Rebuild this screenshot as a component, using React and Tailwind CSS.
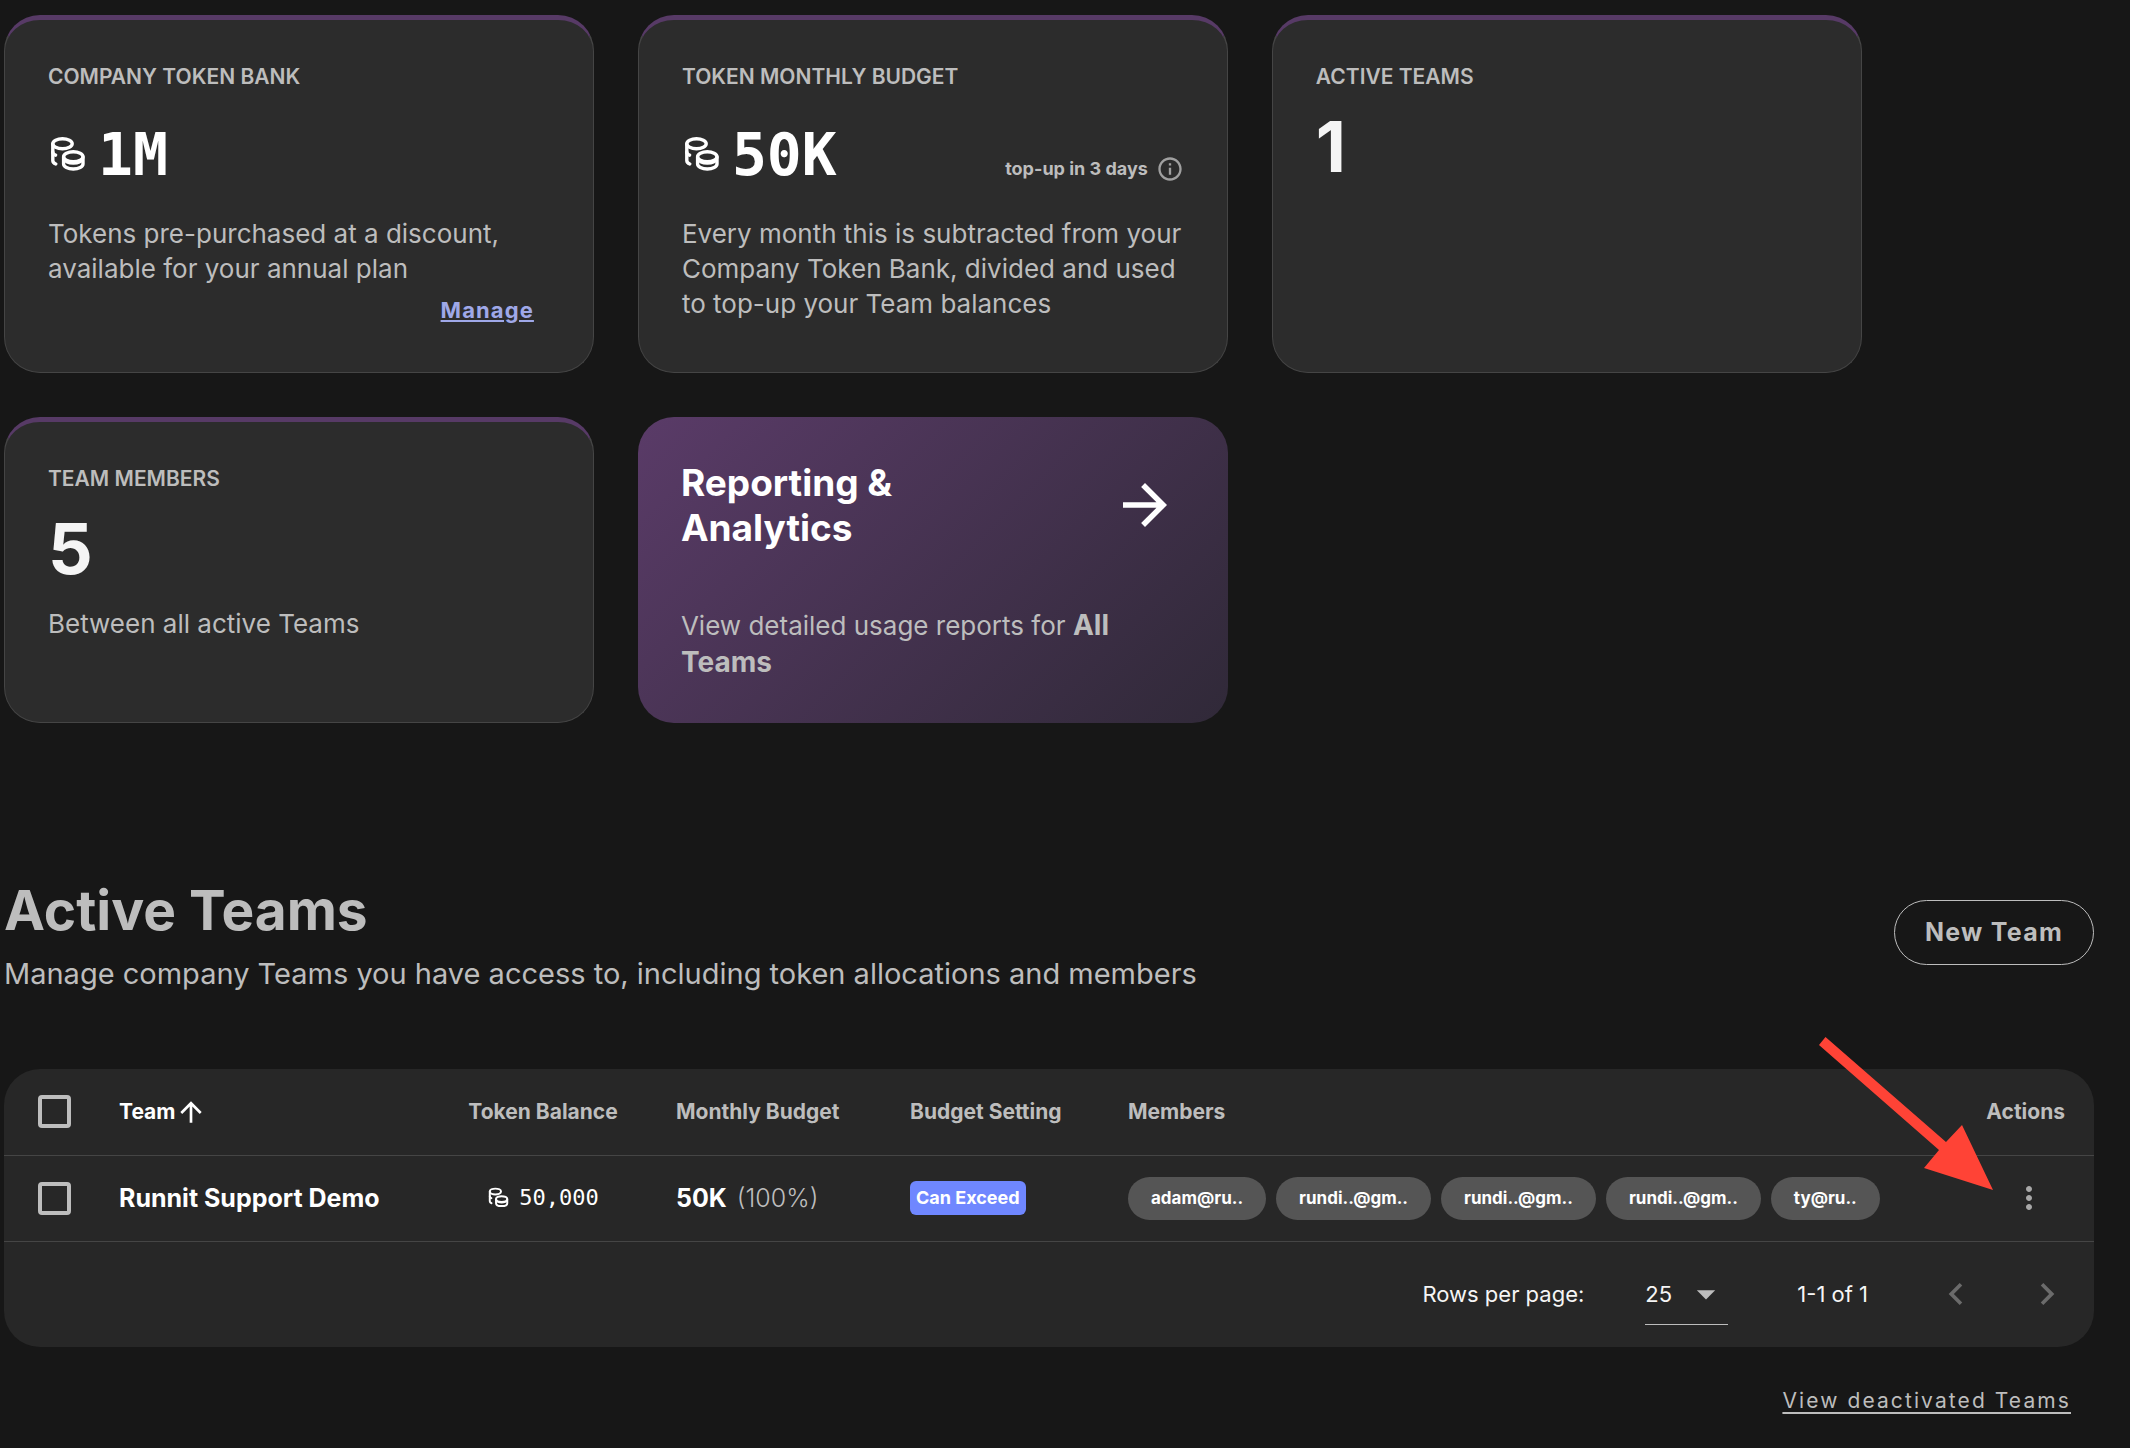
import React, { useState } from "react";
import {
  MdArrowDropDown,
  MdArrowForward,
  MdArrowUpward,
  MdChevronLeft,
  MdChevronRight,
  MdInfoOutline,
  MdMoreVert,
} from "react-icons/md";

const members = ["adam@ru..", "rundi..@gm..", "rundi..@gm..", "rundi..@gm..", "ty@ru.."];

const CoinsIcon = ({ className }) => (
  <svg
    viewBox="-2 0 38 38"
    fill="none"
    stroke="currentColor"
    strokeWidth="3.4"
    strokeLinecap="round"
    className={className}
    aria-hidden="true"
  >
    <ellipse cx="12.5" cy="7.8" rx="9.7" ry="5" />
    <path d="M2.8 8v16.500c0 1.500 1.200 2.800 3 3.500" />
    <path d="M2.800 16c0 1.400 1.200 2.600 2.800 3.200" />
    <ellipse cx="23.3" cy="20.800" rx="9.7" ry="5" />
    <path d="M13.600 21v7c0 2.900 4.300 5 9.700 5s9.700-2.100 9.700-5v-7" />
    <path d="M14 23.500c1 2.400 4.800 4 9.300 4s8.300-1.600 9.300-4" strokeWidth="2.4" />
  </svg>
);

const StatCard = ({ title, children }) => (
  <section className="rounded-[36px] border border-t-[5px] border-[#454545] border-t-[#573a66] bg-[#2c2c2c] px-[43px] pt-[42px] pb-12">
    <h3 className="text-[21px] leading-[29px] font-semibold uppercase">{title}</h3>
    {children}
  </section>
);

const Checkbox = ({ label }) => (
  <input
    type="checkbox"
    aria-label={label}
    className="block size-[33px] appearance-none rounded-[4px] border-4 border-[#bdbdbd] checked:bg-[#6f87ff]"
  />
);

const App = () => {
  const [rows, setRows] = useState("25");

  return (
    <main className="min-h-screen bg-[#171717] pt-[15px] pr-9 pb-8 pl-1 font-['Inter',sans-serif] text-[#bdbdbd]">
      <div className="grid w-8/9 grid-cols-3 gap-11">
        <StatCard title="Company Token Bank">
          <div className="mt-8 flex items-center gap-3 text-white">
            <CoinsIcon className="size-[38px]" />
            <span className="font-['DejaVu_Sans_Mono',monospace] text-[58px] leading-[64px] font-bold">1M</span>
          </div>
          <p className="mt-[29px] text-[26px] leading-[35px]">
            Tokens pre-purchased at a discount, available for your annual plan
          </p>
          <div className="mt-[10px] mr-4 text-right">
            <a href="#manage" className="text-[22px] leading-7 font-bold tracking-wider text-[#9fa8e8] underline">
              Manage
            </a>
          </div>
        </StatCard>

        <StatCard title="Token Monthly Budget">
          <div className="mt-8 flex items-center justify-between text-white">
            <div className="flex items-center gap-3">
              <CoinsIcon className="size-[38px]" />
              <span className="font-['DejaVu_Sans_Mono',monospace] text-[58px] leading-[64px] font-bold">50K</span>
            </div>
            <div className="mb-1 flex items-center gap-2 self-end text-[18px] leading-7 font-bold text-[#bdbdbd]">
              top-up in 3 days
              <MdInfoOutline className="size-7 text-[#a0a0a0]" />
            </div>
          </div>
          <p className="mt-[29px] text-[26px] leading-[35px]">
            Every month this is subtracted from your Company Token Bank, divided and used to top-up your Team balances
          </p>
        </StatCard>

        <StatCard title="Active Teams">
          <p className="mt-4 text-[70px] leading-[80px] font-bold text-[#f5f5f5]">1</p>
        </StatCard>

        <StatCard title="Team Members">
          <p className="mt-4 text-[70px] leading-[80px] font-bold text-[#f5f5f5]">5</p>
          <p className="mt-[17px] text-[26px] leading-[35px]">Between all active Teams</p>
        </StatCard>

        <a
          href="#reports"
          className="block rounded-[36px] bg-linear-135 from-[#5a3b68] to-[#302938] px-[43px] pt-[43px] pb-[42px]"
        >
          <div className="flex items-center justify-between">
            <h3 className="w-[260px] text-[37px] leading-[45px] font-bold text-white">Reporting & Analytics</h3>
            <MdArrowForward className="mr-[7px] size-[66px] text-white" />
          </div>
          <p className="mt-[57px] text-[26px] leading-[37px]">
            View detailed usage reports for <strong className="text-[28px] font-bold">All</strong>{" "}
            <strong className="text-[28px] font-bold">Teams</strong>
          </p>
        </a>
      </div>

      <div className="mt-[151px] flex items-center justify-between">
        <div>
          <h2 className="text-[55px] leading-[72px] font-bold">Active Teams</h2>
          <p className="mt-2 text-[29px] leading-[40px]">
            Manage company Teams you have access to, including token allocations and members
          </p>
        </div>
        <button className="mb-1 h-[65px] rounded-full border border-[#bdbdbd] px-[30px] text-[25px] leading-8 font-bold tracking-wider">
          New Team
        </button>
      </div>

      <div className="relative mt-[75px] rounded-[36px] bg-[#272727]">
        <table className="w-full table-fixed text-left">
          <colgroup>
            <col className="w-[115px]" />
            <col className="w-[326px]" />
            <col className="w-[196px]" />
            <col className="w-[236px]" />
            <col className="w-[218px]" />
            <col />
            <col className="w-[160px]" />
          </colgroup>
          <thead>
            <tr className="h-[86px] border-b border-[#454545] text-[21px] leading-7">
              <th className="pl-[34px]">
                <Checkbox label="Select all teams" />
              </th>
              <th className="font-bold text-white" aria-sort="ascending">
                <button className="flex items-center">
                  Team
                  <MdArrowUpward className="size-8" />
                </button>
              </th>
              <th className="text-center font-bold">Token Balance</th>
              <th className="pl-[35px] font-bold">Monthly Budget</th>
              <th className="pl-[33px] font-bold">Budget Setting</th>
              <th className="pl-[33px] font-bold">Members</th>
              <th className="pr-[29px] text-right font-bold">Actions</th>
            </tr>
          </thead>
          <tbody>
            <tr className="h-[86px] border-b border-[#454545]">
              <td className="pl-[34px]">
                <Checkbox label="Select Runnit Support Demo" />
              </td>
              <td className="text-[25px] leading-8 font-bold text-white">Runnit Support Demo</td>
              <td>
                <div className="flex items-center justify-center gap-2.5 font-['DejaVu_Sans_Mono',monospace] text-[22px] leading-8 text-white">
                  <CoinsIcon className="size-[22px]" />
                  50,000
                </div>
              </td>
              <td className="pl-[35px] text-[25px] leading-8">
                <span className="mr-2.5 font-bold text-white">50K</span>
                <span className="font-light">(100%)</span>
              </td>
              <td className="pl-[33px]">
                <span className="inline-block rounded-md bg-[#6f87ff] px-1.5 py-1 text-[18px] leading-[26px] font-bold text-white">
                  Can Exceed
                </span>
              </td>
              <td className="pl-[33px]">
                <ul className="flex gap-[10px]">
                  {members.map((member, i) => (
                    <li
                      key={i}
                      className="rounded-full bg-[#555555] px-[23px] py-2 text-[17px] leading-[27px] font-bold text-white"
                    >
                      {member}
                    </li>
                  ))}
                </ul>
              </td>
              <td>
                <button aria-label="Team actions" className="mr-[47px] ml-auto block text-[#a8a8a8]">
                  <MdMoreVert className="size-9" />
                </button>
              </td>
            </tr>
          </tbody>
        </table>

        <div className="flex h-[105px] items-center justify-end pr-[25px] text-[22px] leading-8 text-[#f5f5f5]">
          <label htmlFor="rows">Rows per page:</label>
          <div className="relative ml-[61px] h-[61px] border-b border-[#bdbdbd]">
            <select
              id="rows"
              value={rows}
              onChange={(e) => setRows(e.target.value)}
              className="h-full w-[83px] appearance-none outline-none"
            >
              <option>10</option>
              <option>25</option>
              <option>50</option>
            </select>
            <MdArrowDropDown className="pointer-events-none absolute top-2 right-0 size-11 text-[#bdbdbd]" />
          </div>
          <span className="ml-[69px]">1-1 of 1</span>
          <button aria-label="Previous page" disabled className="ml-[66px] text-[#6b6b6b]">
            <MdChevronLeft className="size-11" />
          </button>
          <button aria-label="Next page" disabled className="ml-[47px] text-[#6b6b6b]">
            <MdChevronRight className="size-11" />
          </button>
        </div>

        <svg
          viewBox="0 0 180 160"
          className="pointer-events-none absolute -top-[35px] right-[98px] h-[160px] w-[180px]"
          aria-hidden="true"
        >
          <path d="M3 11 9.500 3 130 108 146 91 177 156 108 134 123 116Z" fill="#ff4336" />
        </svg>
      </div>

      <div className="mt-[38px] mr-[23px] text-right">
        <a href="#deactivated" className="text-[21px] leading-8 tracking-widest underline underline-offset-4">
          View deactivated Teams
        </a>
      </div>
    </main>
  );
};

export default App;
